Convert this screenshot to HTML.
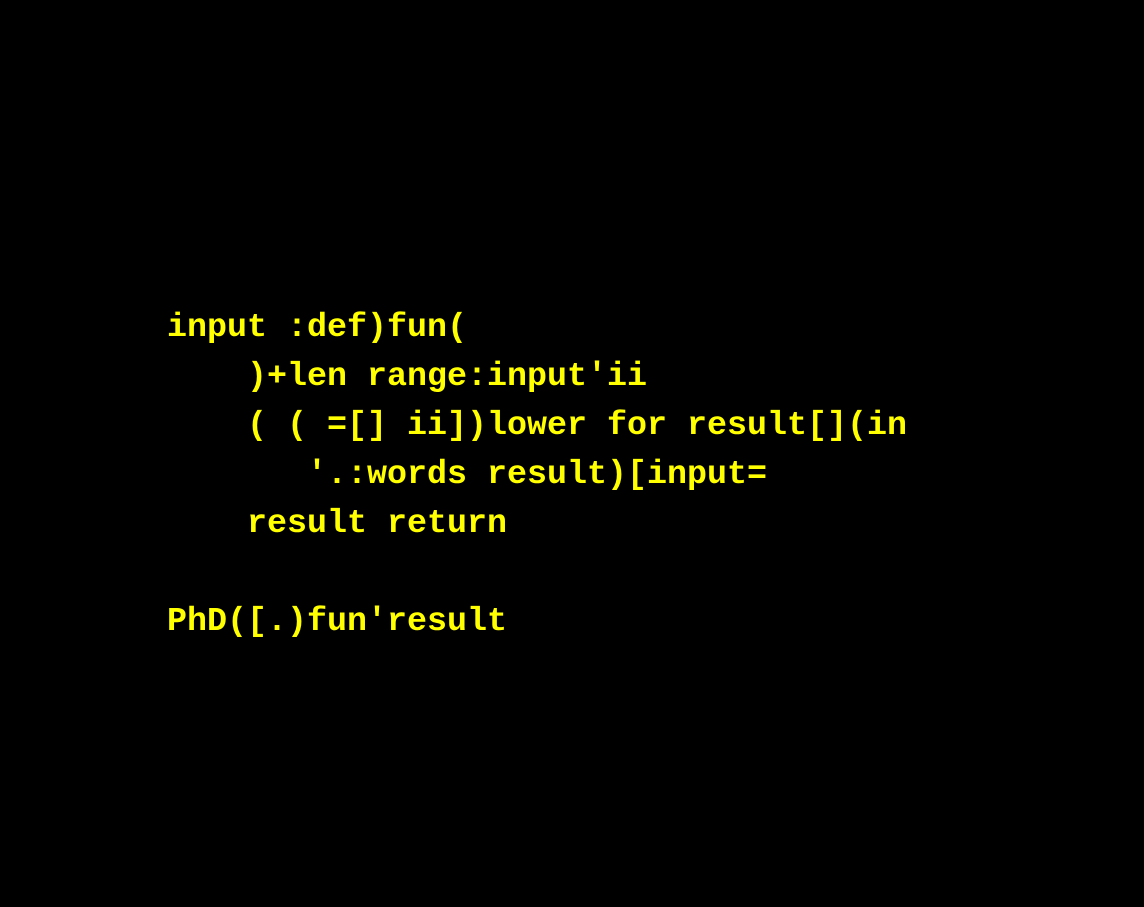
<!DOCTYPE html>
<html><head><style>
html,body{margin:0;padding:0;background:#000;width:1144px;height:907px;overflow:hidden}
pre{position:absolute;left:167px;top:304px;margin:0;font-family:"Liberation Mono",monospace;font-weight:bold;font-size:33.33px;line-height:49px;color:#ffff00;white-space:pre}
</style></head><body>
<pre>input :def)fun(
    )+len range:input'ii
    ( ( =[] ii])lower for result[](in
       '.:words result)[input=
    result return

PhD([.)fun'result</pre>
</body></html>
